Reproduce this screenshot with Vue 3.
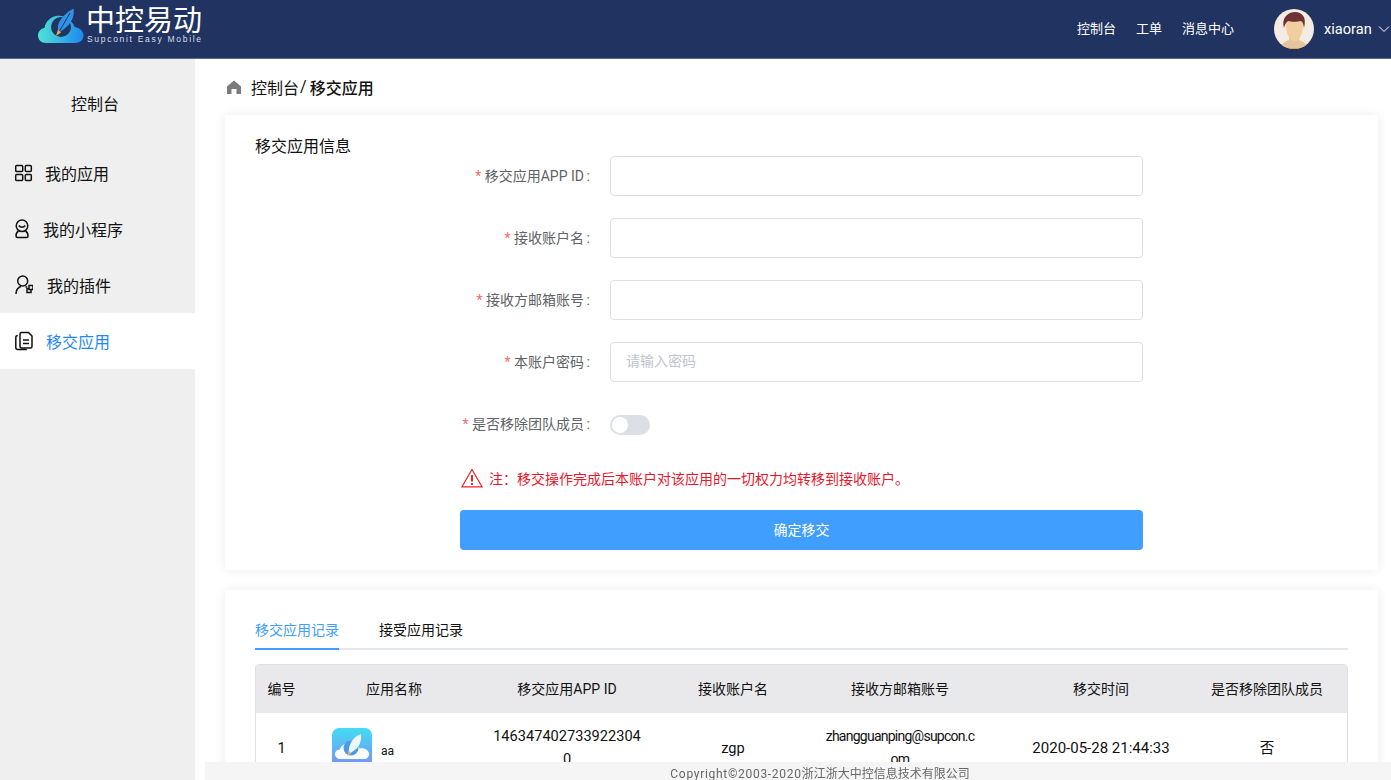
<template>
  <div class="page">
    <header class="topbar">
      <div class="logo">
        <svg class="logo-mark" viewBox="0 0 46 36" width="46" height="36">
          <defs>
            <linearGradient id="cloudGrad" x1="0" y1="0" x2="1" y2="0">
              <stop offset="0" stop-color="#4fe3d6" />
              <stop offset="1" stop-color="#1e88ee" />
            </linearGradient>
          </defs>
          <path fill="url(#cloudGrad)" d="M8 35C3 35 0 31.500 0 27.500C0 23.500 3 20.500 6.500 20C7.500 14 12 9 18 8C22 7.500 28 8 31 12C34 14 36 16 36.500 19C41.500 19.500 45.500 23 45.500 27.500C45.500 32 42 35 37 35Z" />
          <circle cx="23" cy="19" r="10" fill="#21355f" />
          <path fill="#2f93ea" d="M35.500 0.500C37 8 33 16 25.500 21.500L20 25L20 17.500C22 10 29 4 35.500 0.500Z" />
          <path fill="none" stroke="#21355f" stroke-width="1" d="M32 5L21.500 23" />
          <path fill="#e2b04a" d="M20 21.500L18 28L23 24.500Z" />
        </svg>
        <div class="logo-text">
          <div class="logo-cn">中控易动</div>
          <div class="logo-en">Supconit Easy Mobile</div>
        </div>
      </div>
      <nav class="top-nav">
        <a>控制台</a>
        <a>工单</a>
        <a>消息中心</a>
      </nav>
      <div class="user">
        <svg class="avatar" viewBox="0 0 40 40" width="40" height="40">
          <defs>
            <clipPath id="avatarClip"><circle cx="20" cy="20" r="20" /></clipPath>
          </defs>
          <g clip-path="url(#avatarClip)">
            <rect width="40" height="40" fill="#f4ece2" />
            <path fill="#e39b22" d="M3 40C6 36 12 35 20 35C28 35 34 36 37 40Z" />
            <path fill="#e6c4a0" d="M7 37C9 33 13 32 15 31V26H25V31C27 32 31 33 33 37C28 40 12 40 7 37Z" />
            <path fill="#f2cd9f" d="M12 15C12 10 15 8 20 8C25 8 29 10 29 15C29 24 26 32 20.500 32C15 32 12 24 12 15Z" />
            <path fill="#6e3136" d="M10 19C7 9 14 3 21 3C28 3 33 8 30 19C29.500 16 29 13 27 12C23 13 17 13 14 12C12.500 13 11 15 10 19Z" />
          </g>
        </svg>
        <span class="user-name">xiaoran</span>
        <svg class="caret" viewBox="0 0 12 8" width="12" height="8">
          <path d="M1 1.500L6 6.500L11 1.500" fill="none" stroke="#fff" stroke-width="1" />
        </svg>
      </div>
    </header>

    <div class="body">
      <aside class="sidebar">
        <div class="side-title">控制台</div>
        <div
          v-for="item in menu"
          :key="item.name"
          class="side-item"
          :class="{ active: item.active }"
        >
          <svg class="side-icon" viewBox="0 0 18 20" width="18" height="20" fill="none" stroke="#111" stroke-width="1.500">
            <path v-for="d in item.paths" :key="d" :d="d" />
          </svg>
          <span :style="{ marginLeft: item.gap + 'px' }">{{ item.name }}</span>
        </div>
      </aside>

      <main class="main">
        <div class="crumb">
          <svg viewBox="0 0 14 14" width="14" height="14">
            <path fill="#7b7b7b" d="M7 0.500L14 6.500V14H9.500V9H4.500V14H0V6.500Z" />
          </svg>
          <span class="crumb-link">控制台</span>
          <span class="crumb-sep">/</span>
          <b class="crumb-now">移交应用</b>
        </div>

        <section class="card form-card">
          <div class="card-title">移交应用信息</div>
          <form class="form" @submit.prevent>
            <div v-for="f in fields" :key="f.label" class="form-row">
              <label class="form-label"><i>*</i> {{ f.label }}</label>
              <input class="form-input" type="text" :placeholder="f.placeholder" />
            </div>
            <div class="form-row">
              <label class="form-label"><i>*</i> 是否移除团队成员</label>
              <span class="switch"><span class="switch-dot"></span></span>
            </div>
            <div class="notice">
              <svg viewBox="0 0 22 20" width="22" height="20" fill="none" stroke="#e8262c">
                <path stroke-width="1.200" d="M11 1.500L21 18.800H1Z" />
                <path stroke-width="2" d="M11 7V13.500" />
                <path stroke-width="2" d="M11 15V17" />
              </svg>
              <span>注：移交操作完成后本账户对该应用的一切权力均转移到接收账户。</span>
            </div>
            <button class="submit" type="button">确定移交</button>
          </form>
        </section>

        <section class="card record-card">
          <div class="tabs">
            <span class="tab current">移交应用记录</span>
            <span class="tab">接受应用记录</span>
          </div>
          <div class="table-wrap">
            <table class="table">
              <colgroup>
                <col style="width: 51px" />
                <col style="width: 174px" />
                <col style="width: 172px" />
                <col style="width: 160px" />
                <col style="width: 174px" />
                <col style="width: 200px" />
                <col style="width: 160px" />
              </colgroup>
              <thead>
                <tr>
                  <th>编号</th>
                  <th>应用名称</th>
                  <th>移交应用APP ID</th>
                  <th>接收账户名</th>
                  <th>接收方邮箱账号</th>
                  <th class="col-time">移交时间</th>
                  <th>是否移除团队成员</th>
                </tr>
              </thead>
              <tbody>
                <tr v-for="row in records" :key="row.no">
                  <td>{{ row.no }}</td>
                  <td>
                    <div class="app-cell">
                      <svg class="app-icon" viewBox="0 0 40 40" width="40" height="40">
                        <defs>
                          <linearGradient id="appGrad" x1="0" y1="0" x2="0" y2="1">
                            <stop offset="0" stop-color="#43dcf2" />
                            <stop offset="1" stop-color="#7a8ff5" />
                          </linearGradient>
                        </defs>
                        <rect width="40" height="40" rx="7" fill="url(#appGrad)" />
                        <path fill="#fff" d="M8 31C5 31 3 28.500 3 26C3 23.500 5 21.500 8 21.500C9 17.500 13 15 17 15C22 15 26 17 27.500 20.500C32 19.500 37 22 37 26C37 29 35 31 32 31Z" />
                        <circle cx="19" cy="20" r="7.500" fill="#4a9ae8" />
                        <path fill="#eef6fd" d="M29 6C30 13 27 20 20 24L16.500 26L17 20C18.500 13 23 8 29 6Z" />
                        <path fill="#e2b04a" d="M17 23L15.500 28L19 25.500Z" />
                      </svg>
                      <span class="app-name">{{ row.name }}</span>
                    </div>
                  </td>
                  <td class="wrap">{{ row.appId }}</td>
                  <td>{{ row.account }}</td>
                  <td class="wrap email">{{ row.email }}</td>
                  <td class="col-time">{{ row.time }}</td>
                  <td>{{ row.removed }}</td>
                </tr>
              </tbody>
            </table>
          </div>
        </section>
      </main>
    </div>

    <footer class="footer"><span class="copy-en">Copyright©2003-2020</span>浙江浙大中控信息技术有限公司</footer>
  </div>
</template>

<script setup>
const menu = [
  {
    name: '我的应用',
    gap: 12,
    paths: [
      'M1.700 2.500h5a1 1 0 0 1 1 1v4a1 1 0 0 1-1 1h-5a1 1 0 0 1-1-1v-4a1 1 0 0 1 1-1z',
      'M11.300 2.500h4a1 1 0 0 1 1 1v4a1 1 0 0 1-1 1h-4a1 1 0 0 1-1-1v-4a1 1 0 0 1 1-1z',
      'M1.700 11.500h5a1 1 0 0 1 1 1v4a1 1 0 0 1-1 1h-5a1 1 0 0 1-1-1v-4a1 1 0 0 1 1-1z',
      'M11.300 11.500h4a1 1 0 0 1 1 1v4a1 1 0 0 1-1 1h-4a1 1 0 0 1-1-1v-4a1 1 0 0 1 1-1z'
    ]
  },
  {
    name: '我的小程序',
    gap: 10,
    paths: [
      'M7 1a5.800 5.800 0 1 1 0 11.600a5.800 5.800 0 1 1 0-11.600z',
      'M3.500 12c-1.500.8-2.500 2.500-2.500 5c0 1 .5 1.500 1.500 1.500h9c1 0 1.500-.5 1.500-1.500c0-2.500-1-4.200-2.500-5',
      'M3.800 6.500c1.500 2.300 4.900 2.300 6.400 0'
    ]
  },
  {
    name: '我的插件',
    gap: 14,
    paths: [
      'M7.700 1a5 5 0 1 1 0 10a5 5 0 1 1 0-10z',
      'M1 19c0-4 2-6.500 5-7.800',
      'M10.500 11.500l1.500 .8',
      'M14 10.500h4v4h-4z',
      'M16 14.500v3h-4v-4h2'
    ]
  },
  {
    name: '移交应用',
    gap: 13,
    active: true,
    paths: [
      'M5 3c0-.8.7-1.500 1.500-1.500h7l3.500 3.500v10.500c0 .8-.7 1.500-1.500 1.500h-9c-.8 0-1.500-.7-1.500-1.500z',
      'M2.800 4.500c-1.200 0-2 .8-2 2v10c0 1.200.8 2 2 2h9',
      'M8 9h6',
      'M8 12.500h6'
    ]
  }
]

const fields = [
  { label: '移交应用APP ID', placeholder: '' },
  { label: '接收账户名', placeholder: '' },
  { label: '接收方邮箱账号', placeholder: '' },
  { label: '本账户密码', placeholder: '请输入密码' }
]

const records = [
  {
    no: 1,
    name: 'aa',
    appId: '1463474027339223040',
    account: 'zgp',
    email: 'zhangguanping@supcon.com',
    time: '2020-05-28 21:44:33',
    removed: '否'
  }
]
</script>

<style>
html,
body {
  margin: 0;
  background: #fff;
}
</style>

<style scoped>
.page {
  height: 100vh;
  overflow: hidden;
  display: flex;
  flex-direction: column;
  font-family: Roboto, "Noto Sans CJK SC", sans-serif;
  color: #111;
}

.topbar {
  flex: none;
  height: 59px;
  box-sizing: border-box;
  display: flex;
  align-items: center;
  background: #213360;
  border-bottom: 1px solid #5c6a8c;
  color: #fff;
  padding-left: 38px;
}

.logo {
  display: flex;
  align-items: flex-start;
  align-self: flex-start;
}

.logo-mark {
  margin-top: 8px;
}

.logo-text {
  margin-left: 2px;
}

.logo-cn {
  font-size: 29px;
  line-height: 42px;
}

.logo-en {
  font-size: 8.500px;
  line-height: 10px;
  margin-top: -8px;
  margin-left: 1px;
  letter-spacing: 1.700px;
  color: #d9dee8;
  font-family: "Liberation Sans", sans-serif;
  white-space: nowrap;
}

.top-nav {
  margin-left: auto;
  display: flex;
  gap: 20px;
  font-size: 13px;
  padding-bottom: 3px;
}

.user {
  display: flex;
  align-items: center;
  margin-left: 40px;
  width: 117px;
}

.user-name {
  margin-left: 10px;
  font-size: 14.600px;
}

.caret {
  margin-left: 6px;
}

.body {
  flex: 1;
  display: flex;
  min-height: 0;
}

.sidebar {
  flex: none;
  width: 195px;
  background: #efefef;
  font-size: 16px;
}

.side-title {
  height: 86px;
  box-sizing: border-box;
  padding-top: 34px;
  line-height: 24px;
  text-align: center;
  padding-right: 5px;
}

.side-item {
  height: 56px;
  display: flex;
  align-items: center;
  padding-left: 15px;
}

.side-item.active {
  background: #fff;
  color: #1e88f5;
}

.side-icon {
  flex: none;
}

.main {
  flex: 1;
  min-width: 0;
  padding: 0 13px 0 30px;
  overflow: hidden;
}

.crumb {
  height: 56px;
  box-sizing: border-box;
  display: flex;
  align-items: center;
  font-size: 16px;
  padding: 0 0 1px 2px;
}

.crumb-link {
  margin-left: 10px;
}

.crumb-sep {
  margin: 0 3px 0 1px;
}

.crumb-now {
  font-weight: 500;
}

.card {
  background: #fff;
  box-shadow: 0 0 10px rgba(0, 0, 0, 0.08);
}

.form-card {
  display: flex;
  height: 455px;
  box-sizing: border-box;
  padding: 21px 0 0 30px;
}

.card-title {
  flex: none;
  width: 205px;
  font-size: 16px;
  line-height: 22px;
}

.form {
  width: 683px;
  margin-top: 20px;
}

.form-row {
  display: flex;
  align-items: center;
  height: 40px;
  margin-bottom: 22px;
}

.form-label {
  flex: none;
  width: 130px;
  margin-right: 20px;
  padding-bottom: 2px;
  text-align: right;
  font-size: 14px;
  color: #606266;
  white-space: nowrap;
}

.form-label::after {
  content: ":";
  margin-left: 2.600px;
}

.form-label i {
  font-style: normal;
  color: #f56c6c;
}

.form-input {
  width: 533px;
  height: 40px;
  box-sizing: border-box;
  border: 1px solid #dcdfe6;
  border-radius: 4px;
  padding: 0 15px 3px;
  font-size: 14px;
  font-family: inherit;
  outline: none;
}

.form-input::placeholder {
  color: #c0c4cc;
}

.switch {
  width: 40px;
  height: 20px;
  margin-top: 2px;
  border-radius: 10px;
  background: #dcdfe6;
  position: relative;
}

.switch-dot {
  position: absolute;
  top: 2px;
  left: 2px;
  width: 16px;
  height: 16px;
  border-radius: 50%;
  background: #fff;
}

.notice {
  display: flex;
  align-items: center;
  gap: 6px;
  height: 22px;
  margin-top: 23px;
  font-size: 14px;
  color: #e8162c;
  padding-left: 1px;
}

.submit {
  display: block;
  width: 683px;
  height: 40px;
  margin-top: 21px;
  border: 0;
  border-radius: 4px;
  background: #409eff;
  color: #fff;
  font-size: 14px;
  font-family: inherit;
  padding: 0 0 2px;
}

.record-card {
  margin-top: 20px;
  padding: 20px 30px 0;
  height: 300px;
}

.tabs {
  display: flex;
  gap: 40px;
  height: 40px;
  box-sizing: border-box;
  border-bottom: 2px solid #e4e7ed;
  font-size: 14px;
  line-height: 40px;
}

.tab {
  height: 40px;
  box-sizing: border-box;
}

.tab.current {
  color: #409eff;
  border-bottom: 2px solid #409eff;
}

.table-wrap {
  margin-top: 14px;
  border: 1px solid #dfe1e6;
  border-radius: 4px;
  overflow: hidden;
}

.table {
  width: 1091px;
  table-layout: fixed;
  border-collapse: collapse;
  font-size: 14px;
}

.table th {
  height: 48px;
  box-sizing: border-box;
  padding: 0 0 2px;
  background: #e9e9eb;
  font-weight: 400;
  white-space: nowrap;
}

.table td {
  padding: 12px 10px;
  text-align: center;
  line-height: 23px;
  vertical-align: middle;
  font-size: 14.600px;
}

.table td.wrap {
  word-break: break-all;
}

.table td.email {
  font-size: 14px;
  letter-spacing: -0.750px;
}

.table .col-time {
  padding-left: 28px;
}

.table td.col-time {
  padding-right: 0;
  font-size: 15px;
}

.app-cell {
  display: flex;
  align-items: center;
  gap: 9px;
  padding-left: 15px;
}

.app-name {
  font-size: 12px;
  margin-top: 6px;
}

.footer {
  position: fixed;
  left: 205px;
  right: 0;
  bottom: 0;
  height: 18px;
  padding-left: 44px;
  line-height: 25px;
  background: #f5f5f5;
  font-size: 12px;
  color: #666;
  text-align: center;
}

.copy-en {
  letter-spacing: 0.700px;
}
</style>
